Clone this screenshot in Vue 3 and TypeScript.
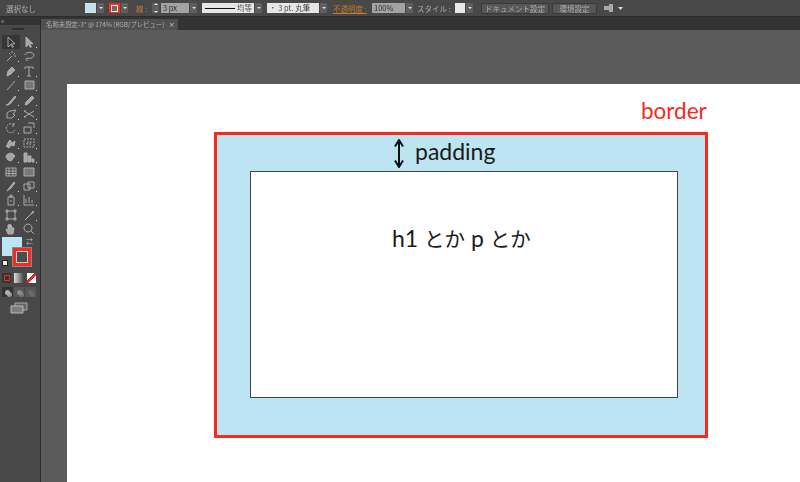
<script setup lang="ts">
// each tool row holds two icons, drawn on a 12x12 grid
interface Tool {
  d: string
  fill?: boolean
  dim?: boolean
  dash?: boolean
  more?: boolean
}

const toolRows: { y: number; tools: Tool[] }[] = [
  { y: 0, tools: [{ d: 'M3 1v10l2.5-2.5 2 3 1-.7-2-3H10z' }, { d: 'M3 1v10l2.5-2.5 2 3 1-.7-2-3H10z', fill: true, more: true }] },
  { y: 1, tools: [{ d: 'M2 11l5-5M7 1v2M10 3L8.5 4.500M11 6H9M4 3l1.500 1.500', more: true }, { d: 'M2 5c0-3 8-4 9 0 0 3-5 4-7 3M4 8c-2 1-1 3 1 2' }] },
  { y: 2, tools: [{ d: 'M2 11l1-5 4-4 3 3-4 4zM2 11l3-3', fill: true, more: true }, { d: 'M2 2h8v2M6 2v9M4 11h4M2 2v2', more: true }] },
  { y: 3, tools: [{ d: 'M2 11L10 2', more: true }, { d: 'M2 2h9v8H2z', fill: true, dim: true, more: true }] },
  { y: 4, tools: [{ d: 'M1 11c2 0 2-1 3-2l6-7 1 1-6 7c-1 1-2 1-4 1z', fill: true, more: true }, { d: 'M2 11l1-3 6-6 2 2-6 6z', fill: true, more: true }] },
  { y: 5, tools: [{ d: 'M2 10V5l3-2 6-1-3 4 2 1-3 3z', more: true }, { d: 'M1 3l10 6M1 9l10-6M1 3h2M1 9h2', more: true }] },
  { y: 6, tools: [{ d: 'M9 3a4.500 4.500 0 1 0 1 5M9 1v3H6', dash: true, more: true }, { d: 'M1 5h7v6H1zM5 1h6v5', more: true }] },
  { y: 7, tools: [{ d: 'M1 9c2-1 2-5 4-6l2 3 3-2-1 5-3-1-2 3z', fill: true, more: true }, { d: 'M1 2h10v8H1zM4 5h4v2H4z', dash: true, more: true }] },
  { y: 8, tools: [{ d: 'M1 6c0-3 4-5 7-3l2 2-4 5-3-1z', fill: true, more: true }, { d: 'M1 11V2h3v9zM5 11V5h3v6zM9 11V8h2v3z', fill: true, more: true }] },
  { y: 9, tools: [{ d: 'M1 2h10v8H1zM1 5h10M1 7.500h10M4 2v8M8 2v8' }, { d: 'M1 2h10v8H1z', fill: true, dim: true }] },
  { y: 10, tools: [{ d: 'M2 11l3-4 4-5 1 1-4 5z', fill: true, more: true }, { d: 'M1 4h6v6H1zM5 2h6v6H5z', more: true }] },
  { y: 11, tools: [{ d: 'M3 3h6v8H3zM5 1h2v2H5zM6 6v2', more: true }, { d: 'M1 1v10h10M3 9V5M6 9V3M9 9V6', more: true }] },
  { y: 12, tools: [{ d: 'M2 2h8v8H2zM1 1h2v2H1zM9 1h2v2H9zM1 9h2v2H1zM9 9h2v2H9z' }, { d: 'M2 11l6-6 2-3 1 1-3 2-6 6z', fill: true, more: true }] },
  { y: 13, tools: [{ d: 'M3 11L1 6l2 1V2l1 3V1l1 4V1l1 4V2l1 3 2 0-1 6z', fill: true }, { d: 'M5 1a4 4 0 1 0 .01 0zM7.500 7.500L11 11' }] },
]

function toolFill(tool: Tool): string {
  if (!tool.fill) return 'none'
  return tool.dim ? '#777' : '#a6a6a6'
}
</script>

<template>
  <div class="app">
    <header class="control-bar">
      <span class="label no-sel">選択なし</span>
      <span class="swatch fill-swatch"></span>
      <span class="caret-box"></span>
      <span class="swatch stroke-swatch"><i></i></span>
      <span class="caret-box"></span>
      <span class="label orange stroke-label">線 :</span>
      <span class="spinner"></span>
      <span class="field size-field">3 px</span>
      <span class="caret-box"></span>
      <span class="line-select"><i></i>均等</span>
      <span class="caret-box"></span>
      <span class="brush-select">・ 3 pt. 丸筆</span>
      <span class="caret-box"></span>
      <span class="label orange opacity-label">不透明度 :</span>
      <span class="field opacity-field">100%</span>
      <span class="caret-box"></span>
      <span class="label style-label">スタイル :</span>
      <span class="style-swatch"></span>
      <span class="caret-box"></span>
      <span class="bar-btn doc-btn">ドキュメント設定</span>
      <span class="bar-btn env-btn">環境設定</span>
      <svg class="arrange" width="24" height="10" viewBox="0 0 24 10">
        <path d="M1 3h5V1h4v8H6V7H1z" fill="#a8a8a8" />
        <path d="M15 4h5l-2.500 3z" fill="#ddd" />
      </svg>
    </header>

    <div class="workspace">
      <aside class="tools">
        <div class="tools-head">«</div>
        <div class="tools-grip"><i></i></div>
        <div class="tool-grid">
          <div v-for="row in toolRows" :key="row.y" class="tool-row">
            <span v-for="(tool, i) in row.tools" :key="i" class="tool" :class="{ active: row.y === 0 && i === 0, more: tool.more }">
              <svg width="12" height="12" viewBox="0 0 12 12">
                <path :d="tool.d" :fill="toolFill(tool)" :stroke-dasharray="tool.dash ? '2 1' : undefined" stroke="#b4b4b4" stroke-width="0.9" />
              </svg>
            </span>
          </div>
        </div>

        <div class="colors">
          <span class="big-fill"></span>
          <span class="big-stroke"><i></i></span>
          <span class="swap">⇄</span>
          <span class="defaults"></span>
        </div>

        <div class="mode-row">
          <span class="mode color"><i></i></span>
          <span class="mode gradient"></span>
          <span class="mode none"></span>
        </div>
        <div class="draw-row">
          <span class="draw on"><i></i></span>
          <span class="draw"><i></i></span>
          <span class="draw dim"><i></i></span>
        </div>
        <svg class="screen-mode" width="18" height="12" viewBox="0 0 18 12">
          <path d="M5 1h12v7H5z" fill="#666" stroke="#a8a8a8" />
          <path d="M1 4h12v7H1z" fill="#7d7d7d" stroke="#b8b8b8" />
        </svg>
      </aside>

      <main class="document">
        <div class="tab-bar">
          <div class="tab">
            <span>名称未設定-3* @ 174% (RGB/プレビュー)</span>
            <span class="tab-close">×</span>
          </div>
        </div>
        <div class="canvas">
          <div class="artboard">
            <div class="border-label">border</div>
            <div class="box">
              <div class="padding-row">
                <svg width="12" height="29" viewBox="0 0 12 29">
                  <path d="M6 2v25" stroke="#111" stroke-width="2" />
                  <path d="M2 7.500L6 1l4 6.500M2 21.500L6 28l4-6.500" fill="none" stroke="#111" stroke-width="2" />
                </svg>
                <span class="padding-text">padding</span>
              </div>
              <div class="content">h1 <span class="kana">とか</span> p <span class="kana">とか</span></div>
            </div>
          </div>
        </div>
      </main>
    </div>
  </div>
</template>

<style>
html,
body {
  margin: 0;
  background: #5b5b5b;
}
</style>

<style scoped>
.app {
  width: 800px;
  height: 482px;
  overflow: hidden;
  display: flex;
  flex-direction: column;
  font-family: "Noto Sans CJK JP", "Noto Sans", sans-serif;
}

/* top control bar */
.control-bar {
  height: 17px;
  flex: none;
  box-sizing: border-box;
  display: flex;
  align-items: center;
  background: #484848;
  border-bottom: 1px solid #2c2c2c;
  font-size: 7.500px;
  color: #b0b0b0;
  white-space: nowrap;
  filter: blur(0.35px);
}

.label {
  flex: none;
}

.no-sel {
  width: 79px;
  margin-left: 6px;
}

.orange {
  color: #c87a2c;
}

.swatch {
  width: 11px;
  height: 10px;
  flex: none;
  box-sizing: border-box;
}

.fill-swatch {
  background: #bde4f3;
  border: 1px solid #ddd;
}

.stroke-swatch {
  margin-left: 5px;
  background: #f42b1d;
  display: flex;
  align-items: center;
  justify-content: center;
}

.stroke-swatch i {
  width: 5px;
  height: 5px;
  background: #6a6a6a;
  border: 1px solid #eee;
}

.caret-box {
  width: 7px;
  height: 10px;
  margin-left: 1px;
  flex: none;
  background: #5e5e5e;
  position: relative;
}

.caret-box::after {
  content: "";
  position: absolute;
  left: 2px;
  top: 4px;
  border: 2px solid transparent;
  border-top: 2.500px solid #ddd;
  border-bottom: 0;
}

.stroke-label {
  width: 16px;
  margin-left: 8px;
}

.spinner {
  width: 7px;
  height: 10px;
  flex: none;
  background: #5e5e5e;
  position: relative;
}

.spinner::before,
.spinner::after {
  content: "";
  position: absolute;
  left: 1.500px;
  border: 2px solid transparent;
}

.spinner::before {
  top: 0;
  border-bottom: 2.500px solid #ddd;
  border-top: 0;
}

.spinner::after {
  bottom: 0;
  border-top: 2.500px solid #ddd;
  border-bottom: 0;
}

.field {
  height: 10px;
  margin-left: 2px;
  flex: none;
  box-sizing: border-box;
  padding-left: 2px;
  line-height: 10px;
  background: #a3a3a3;
  color: #2e2e2e;
}

.size-field {
  width: 28px;
}

.line-select {
  width: 52px;
  height: 10px;
  margin-left: 5px;
  flex: none;
  display: flex;
  align-items: center;
  gap: 2px;
  box-sizing: border-box;
  padding-left: 3px;
  line-height: 10px;
  background: #e6e6e6;
  color: #555;
}

.line-select i {
  width: 30px;
  height: 1px;
  background: #111;
}

.brush-select {
  width: 52px;
  height: 10px;
  margin-left: 5px;
  flex: none;
  box-sizing: border-box;
  padding-left: 2px;
  line-height: 10px;
  background: #e6e6e6;
  color: #444;
}

.opacity-label {
  width: 37px;
  margin-left: 6px;
  text-decoration: underline;
}

.opacity-field {
  width: 33px;
}

.style-label {
  width: 38px;
  margin-left: 4px;
}

.style-swatch {
  width: 10px;
  height: 10px;
  flex: none;
  background: #e8e8e8;
}

.bar-btn {
  height: 11px;
  flex: none;
  box-sizing: border-box;
  border: 1px solid #3a3a3a;
  background: #575757;
  text-align: center;
  line-height: 9px;
  border-radius: 1px;
}

.doc-btn {
  width: 68px;
  margin-left: 8px;
}

.env-btn {
  width: 45px;
  margin-left: 3px;
}

.arrange {
  margin-left: 6px;
  flex: none;
}

.workspace {
  flex: 1;
  min-height: 0;
  display: flex;
}

/* tools panel */
.tools {
  width: 41px;
  flex: none;
  box-sizing: border-box;
  background: #484848;
  border-right: 1px solid #2c2c2c;
  filter: blur(0.3px);
}

.tools-head {
  height: 8px;
  background: #333;
  font-size: 7px;
  line-height: 7px;
  padding-left: 1px;
  color: #aaa;
}

.tools-grip {
  height: 10px;
  padding: 3px 0 0 12px;
  box-sizing: border-box;
}

.tools-grip i {
  display: block;
  width: 12px;
  height: 2px;
  background: #303030;
}

.tool-row {
  display: flex;
  height: 14.400px;
  padding-left: 2px;
}

.tool {
  width: 18px;
  height: 14px;
  display: flex;
  align-items: center;
  justify-content: center;
  position: relative;
}

.tool.active {
  background: #363636;
}

.tool.more::after {
  content: "";
  position: absolute;
  right: 1px;
  bottom: 1px;
  width: 1px;
  height: 1px;
  background: #ddd;
}

.colors {
  height: 34px;
  position: relative;
}

.big-fill {
  position: absolute;
  left: 2px;
  top: 1px;
  width: 20px;
  height: 19px;
  background: #bde4f3;
}

.big-stroke {
  position: absolute;
  left: 12px;
  top: 10.500px;
  width: 20px;
  height: 20px;
  box-sizing: border-box;
  background: #f42b1d;
  border: 1px solid #888;
  display: flex;
  align-items: center;
  justify-content: center;
}

.big-stroke i {
  width: 10px;
  height: 10px;
  background: #4d4d4d;
  border: 1px solid #ccc;
}

.swap {
  position: absolute;
  left: 26px;
  top: 1px;
  font-size: 7px;
  line-height: 8px;
  color: #bbb;
}

.defaults {
  position: absolute;
  left: 2px;
  top: 24px;
  width: 4px;
  height: 4px;
  background: #eee;
  border: 1px solid #222;
}

.mode-row,
.draw-row {
  display: flex;
  margin-left: 2px;
  width: 34px;
  height: 10px;
}

.mode-row {
  margin-top: 3px;
  gap: 3px;
}

.mode {
  flex: 1;
  box-sizing: border-box;
  background: #333;
  display: flex;
  align-items: center;
  justify-content: center;
}

.mode.color i {
  width: 4px;
  height: 4px;
  border: 1.500px solid #f42b1d;
}

.mode.gradient {
  background: linear-gradient(90deg, #ddd, #444);
}

.mode.none {
  background: linear-gradient(135deg, #fff 42%, #e22 42%, #e22 58%, #fff 58%);
}

.draw-row {
  margin-top: 4px;
  gap: 1px;
}

.draw {
  flex: 1;
  background: #585858;
  display: flex;
  align-items: center;
  justify-content: center;
}

.draw i {
  width: 5px;
  height: 5px;
  border-radius: 50%;
  background: #8c8c8c;
  box-shadow: 2px 2px 0 #777;
}

.draw.on {
  background: #333;
}

.draw.on i {
  background: #b0b0b0;
  box-shadow: 2px 2px 0 #999;
}

.draw.dim i {
  background: #6a6a6a;
  box-shadow: 2px 2px 0 #666;
}

.screen-mode {
  display: block;
  margin: 5px 0 0 10px;
}

/* document */
.document {
  flex: 1;
  min-width: 0;
  display: flex;
  flex-direction: column;
}

.tab-bar {
  height: 13px;
  flex: none;
  box-sizing: border-box;
  padding-top: 2px;
  background: #333;
}

.tab {
  width: 137px;
  height: 11px;
  box-sizing: border-box;
  padding: 0 3px 0 5px;
  display: flex;
  justify-content: space-between;
  background: #505050;
  font-size: 6.500px;
  letter-spacing: -0.1px;
  line-height: 11px;
  color: #b0b0b0;
  white-space: nowrap;
  filter: blur(0.3px);
}

.tab-close {
  color: #ccc;
}

.canvas {
  flex: 1;
  min-height: 0;
  padding: 54px 0 0 26px;
  background: #5b5b5b;
}

.artboard {
  height: 100%;
  background: #fff;
  box-sizing: border-box;
  padding-top: 15px;
  font-family: Lato, "Noto Sans CJK JP", sans-serif;
}

.border-label {
  height: 33px;
  padding-left: 574px;
  font-size: 22.500px;
  line-height: 24px;
  color: #f42b1d;
}

.box {
  width: 494px;
  height: 306px;
  margin-left: 147px;
  box-sizing: border-box;
  border: 3px solid #f42b1d;
  background: #bde4f3;
  padding: 0 27px 0 33px;
}

.padding-row {
  height: 36px;
  display: flex;
  align-items: center;
  gap: 10px;
  padding-left: 143px;
  font-size: 23px;
  color: #1a1a1a;
}

.padding-text {
  margin-top: -5px;
}

.content {
  height: 227px;
  box-sizing: border-box;
  border: 1.500px solid #444;
  background: #fff;
  padding: 50px 0 0 141px;
  font-size: 23px;
  line-height: 32px;
  color: #1a1a1a;
}

.kana {
  font-size: 20.500px;
}
</style>
